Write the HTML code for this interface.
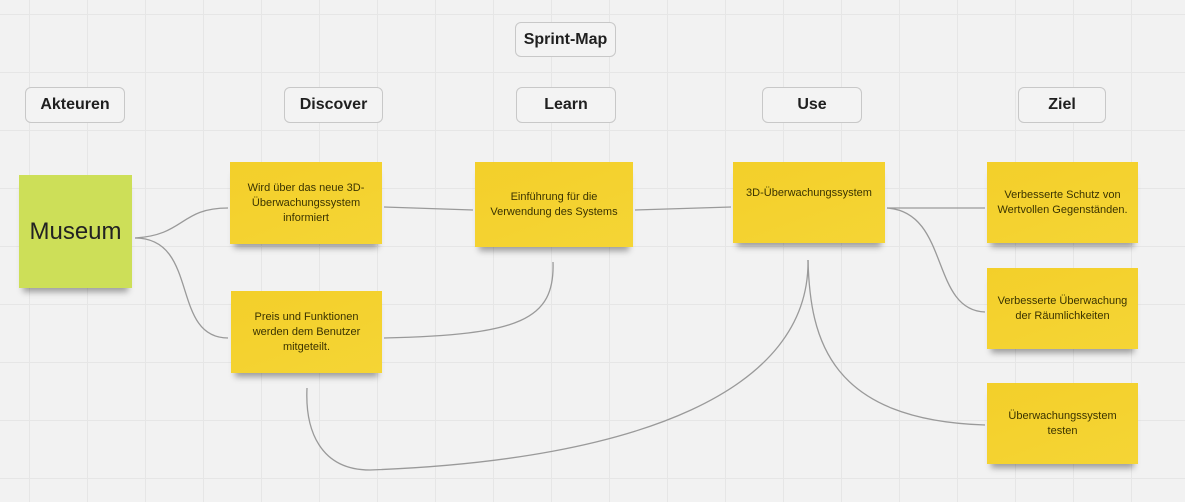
<!DOCTYPE html>
<html><head><style>
body{margin:0;width:1185px;height:502px;overflow:hidden;background:#f2f2f2;position:relative;font-family:"Liberation Sans","DejaVu Sans",sans-serif;
background-image:linear-gradient(#e6e6e6 1px,transparent 1px),linear-gradient(90deg,#e6e6e6 1px,transparent 1px);background-size:58px 58px;background-position:29px 14px}
.h{position:absolute;border:1px solid #c8c8c8;border-radius:6px;background:#f3f3f3;font-weight:bold;font-size:16px;color:#1f1f1f;display:flex;align-items:center;justify-content:center;box-sizing:border-box}
.s{position:absolute;background:linear-gradient(160deg,#f3cf2a,#f5d535);box-shadow:0 8px 6px -4px rgba(0,0,0,.35);display:flex;align-items:center;justify-content:center;text-align:center;font-size:11px;line-height:15px;color:#3a3300;box-sizing:border-box;padding:4px 12px}
svg{position:absolute;left:0;top:0}
</style></head><body>
<svg width="1185" height="502"><g fill="none" stroke="#9a9a9a" stroke-width="1.3">
<path d="M135 238 C185 235,180 208,228 208"/>
<path d="M135 238 C200 238,170 338,228 338"/>
<path d="M384 207 L473 210"/>
<path d="M635 210 L731 207"/>
<path d="M384 338 C520 335,555 320,553 262"/>
<path d="M887 208 L985 208"/>
<path d="M887 208 C950 212,930 310,985 312"/>
<path d="M808 260 C810 340,830 420,985 425"/>
<path d="M808 260 C810 390,640 460,370 470 C320 470,305 430,307 388"/>
</g></svg>
<div class="h" style="left:515px;top:22px;width:101px;height:35px">Sprint-Map</div>
<div class="h" style="left:25px;top:87px;width:100px;height:36px">Akteuren</div>
<div class="h" style="left:284px;top:87px;width:99px;height:36px">Discover</div>
<div class="h" style="left:516px;top:87px;width:100px;height:36px">Learn</div>
<div class="h" style="left:762px;top:87px;width:100px;height:36px">Use</div>
<div class="h" style="left:1018px;top:87px;width:88px;height:36px">Ziel</div>
<div class="s" style="left:19px;top:175px;width:113px;height:113px;background:#cddf58;font-size:24px;color:#222;padding:4px">Museum</div>
<div class="s" style="left:230px;top:162px;width:152px;height:82px;padding:4px 6px">Wird über das neue 3D-Überwachungssystem informiert</div>
<div class="s" style="left:231px;top:291px;width:151px;height:82px;padding:4px 18px">Preis und Funktionen werden dem Benutzer mitgeteilt.</div>
<div class="s" style="left:475px;top:162px;width:158px;height:85px">Einführung für die Verwendung des Systems</div>
<div class="s" style="left:733px;top:162px;width:152px;height:81px;padding-bottom:22px">3D-Überwachungssystem</div>
<div class="s" style="left:987px;top:162px;width:151px;height:81px;padding:4px 6px">Verbesserte Schutz von Wertvollen Gegenständen.</div>
<div class="s" style="left:987px;top:268px;width:151px;height:81px;padding:4px 6px">Verbesserte Überwachung der Räumlichkeiten</div>
<div class="s" style="left:987px;top:383px;width:151px;height:81px;padding:4px 22px">Überwachungssystem testen</div>
</body></html>
